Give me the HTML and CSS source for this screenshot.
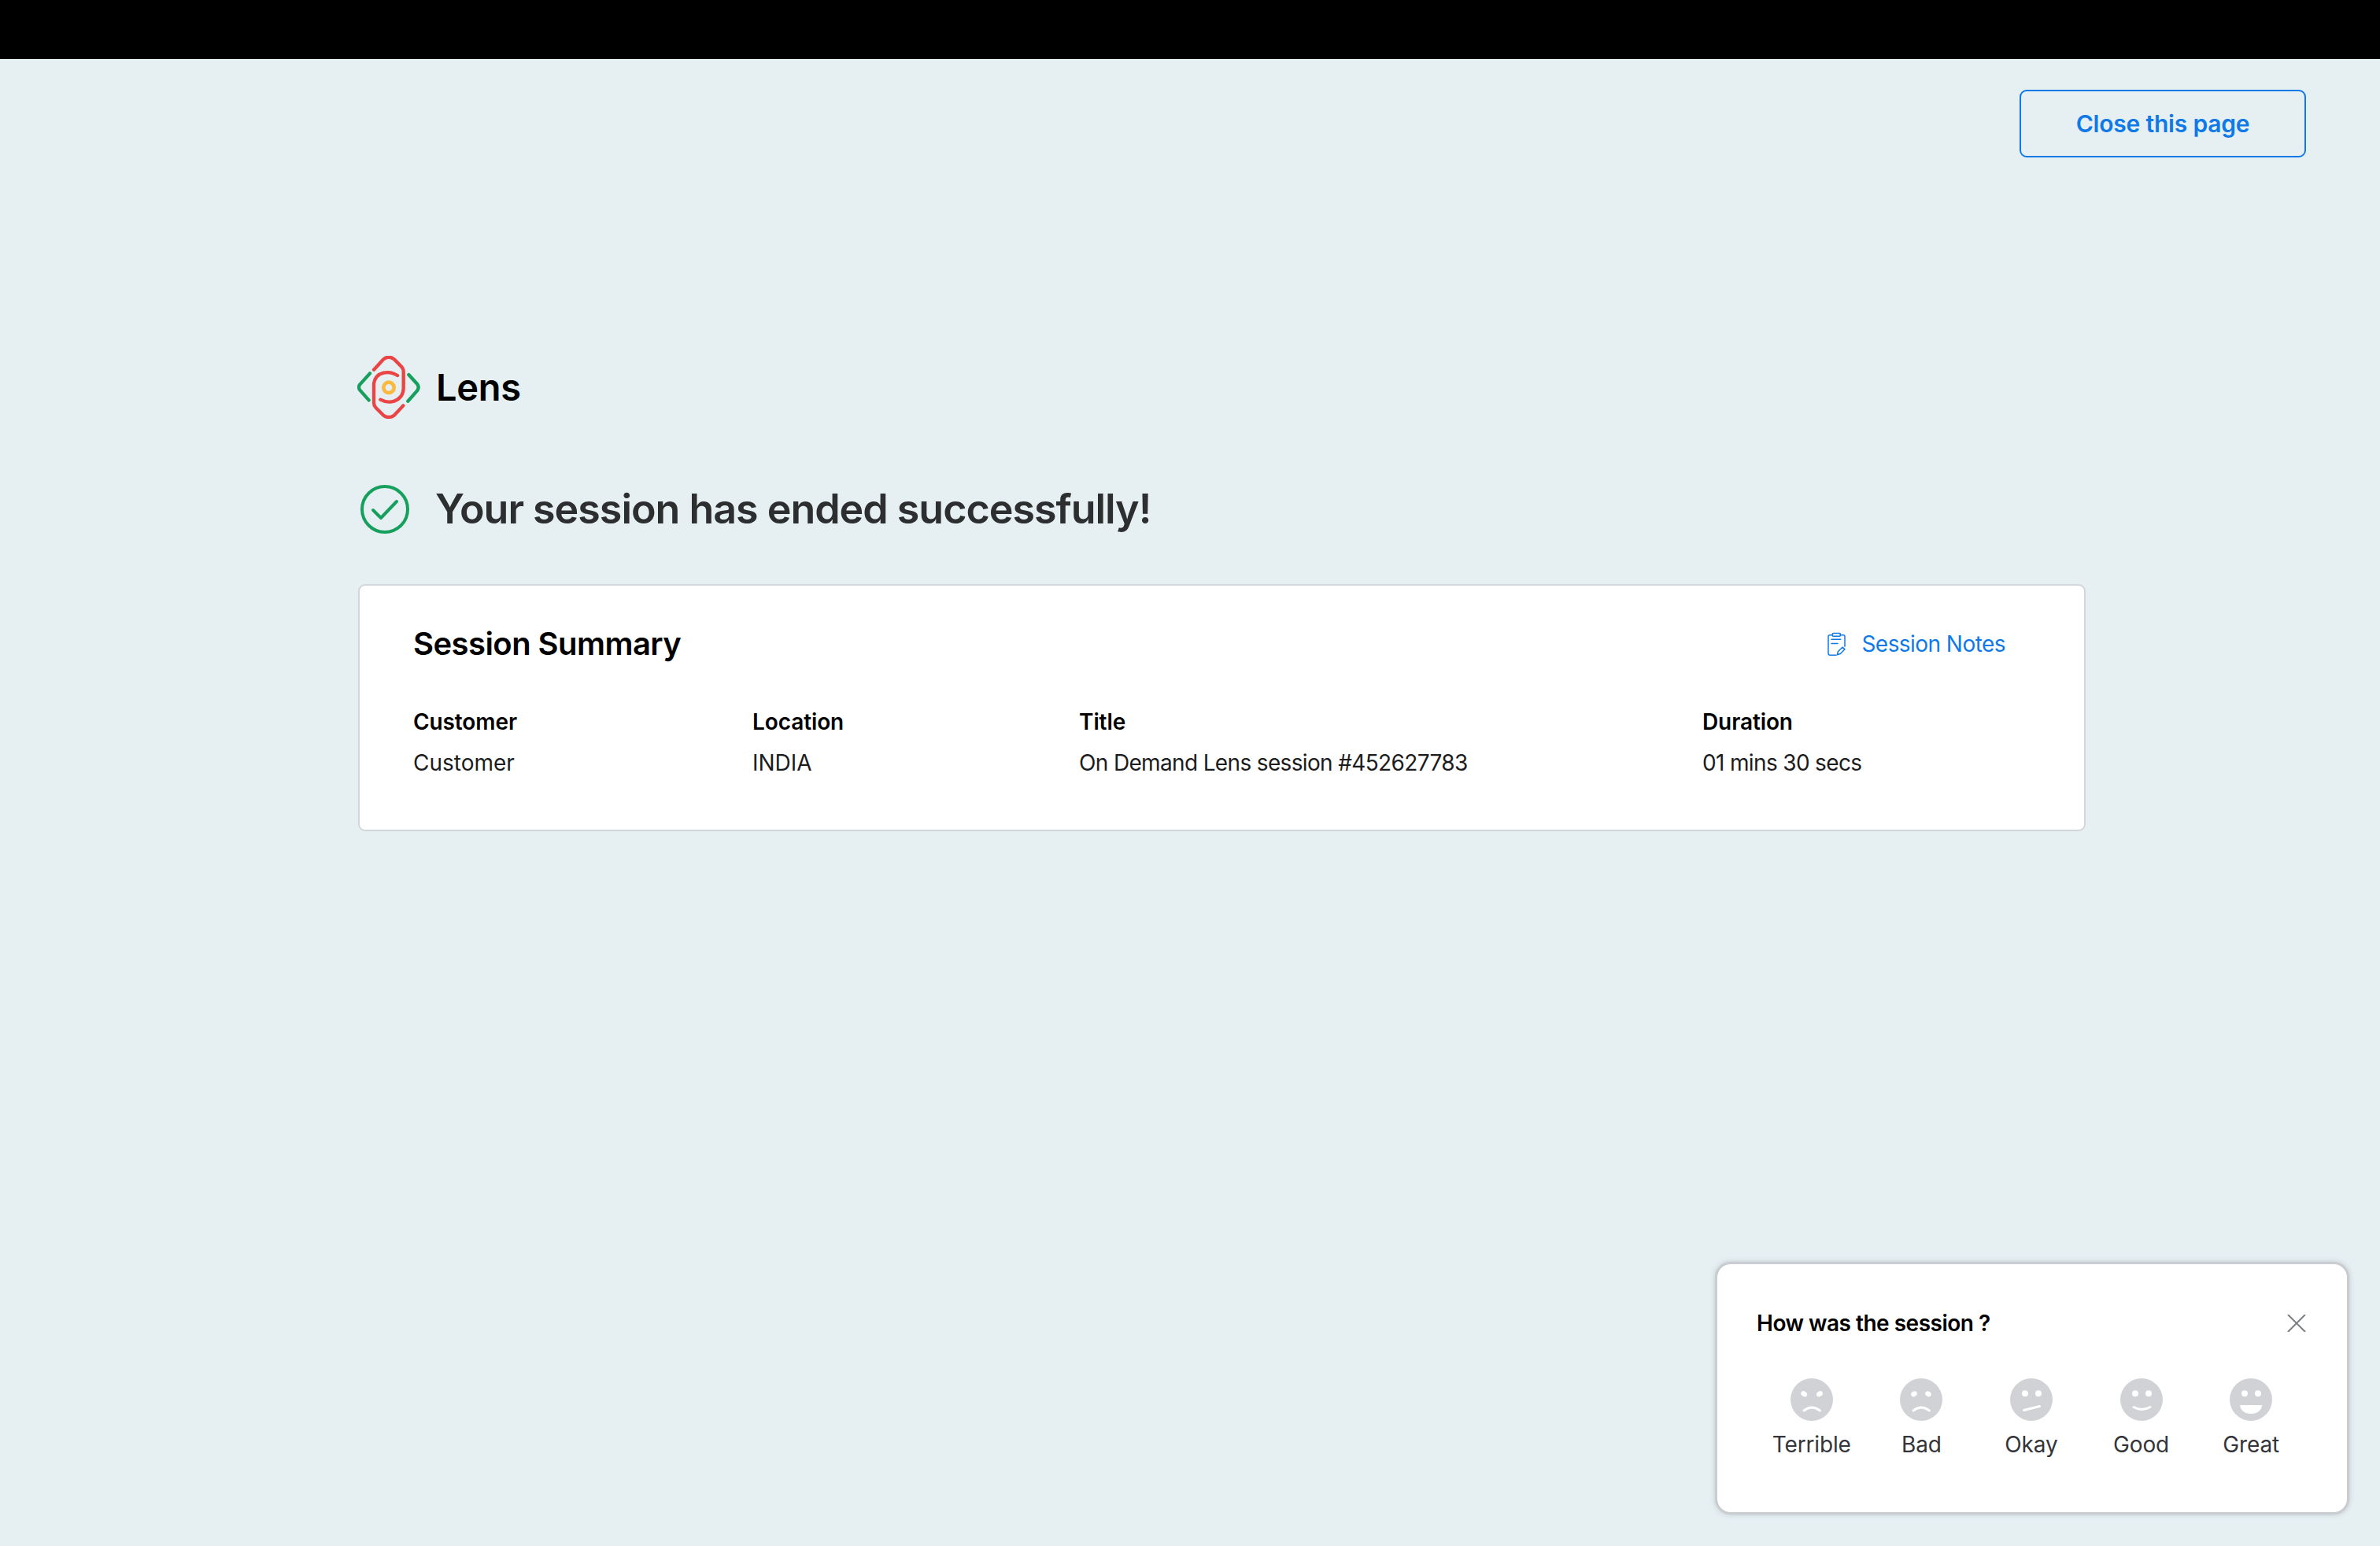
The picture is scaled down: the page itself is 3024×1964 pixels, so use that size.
FILE: index.html
```html
<!DOCTYPE html>
<html lang="en">
<head>
<meta charset="utf-8">
<title>Lens</title>
<link rel="stylesheet" href="styles.css">
</head>
<body>
<div class="topbar"></div>
<div class="actions"><button class="close-btn">Close this page</button></div>
<main class="content">
  <div class="brand">
    <svg class="brand-logo" viewBox="72 65 240 240" fill="none" stroke-linecap="round" stroke-linejoin="round" stroke-width="13">
      <path stroke="#17a05d" d="M120 132L82 174Q74 185 82 196L116 234"/>
      <path stroke="#17a05d" d="M268 137L300 172Q310 185 300 198L265 238"/>
      <path stroke="#ea4444" d="M135 118L172 78Q192 62 212 78L240 106Q248 114 248 126V190Q246 226 212 238Q186 246 160 232"/>
      <path stroke="#ea4444" d="M247 255L212 292Q192 306 172 292L142 262Q135 254 135 244V170Q140 138 172 130Q200 124 225 140"/>
      <circle cx="192" cy="186" r="20" stroke="#fbb93f" stroke-width="14"/>
    </svg>
    <span class="brand-name">Lens</span>
  </div>
  <div class="status">
    <svg class="status-icon" viewBox="0 0 62 62" fill="none" stroke="#17a05d">
      <circle cx="31" cy="31" r="29" stroke-width="4"/>
      <path d="M16 32L26 42L46 21" stroke-width="4" stroke-linecap="round" stroke-linejoin="round"/>
    </svg>
    <h1 class="status-text">Your session has ended successfully!</h1>
  </div>
  <section class="card">
    <div class="card-head">
      <h2 class="card-title">Session Summary</h2>
      <a class="notes-link">
        <svg class="notes-icon" viewBox="190 130 75 92" fill="none" stroke="#1079e8" stroke-width="4.5" stroke-linecap="round" stroke-linejoin="round">
          <path d="M212 141H202Q196 141 196 147V210Q196 217 202 217H226"/>
          <path d="M242 141H253Q259 141 259 147V184"/>
          <rect x="212" y="134" width="30" height="11" rx="3"/>
          <path d="M208 157H243M208 173H232"/>
          <path d="M230 216L233 204L250 187L259 195L242 212Z"/>
        </svg>
        <span>Session Notes</span>
      </a>
    </div>
    <div class="summary">
      <div class="label">Customer</div><div class="label">Location</div><div class="label">Title</div><div class="label">Duration</div>
      <div class="value">Customer</div><div class="value">INDIA</div><div class="value value-tight">On Demand Lens session #452627783</div><div class="value value-tight">01 mins 30 secs</div>
    </div>
  </section>
</main>
<aside class="feedback">
  <div class="feedback-head">
    <span class="feedback-title">How was the session ?</span>
    <svg class="feedback-close" viewBox="0 0 24 22" fill="none" stroke="#7b7f83" stroke-width="2"><path d="M1 0L23 22M23 0L1 22"/></svg>
  </div>
  <div class="ratings">
    <div class="rating">
      <svg class="face" viewBox="0 0 54 54"><circle class="face-bg" cx="27" cy="27" r="27"/><ellipse class="face-fg" cx="17.2" cy="19.8" rx="4.2" ry="3.2" transform="rotate(30 17.2 19.8)"/><ellipse class="face-fg" cx="37" cy="19.8" rx="4.2" ry="3.2" transform="rotate(-30 37 19.8)"/><path class="face-line" d="M17 41Q27 33 37.5 41"/></svg>
      <span class="rating-name">Terrible</span>
    </div>
    <div class="rating">
      <svg class="face" viewBox="0 0 54 54"><circle class="face-bg" cx="27" cy="27" r="27"/><ellipse class="face-fg" cx="18" cy="19.8" rx="4" ry="3.2" transform="rotate(-30 18 19.8)"/><ellipse class="face-fg" cx="36" cy="19.8" rx="4" ry="3.2" transform="rotate(30 36 19.8)"/><path class="face-line" d="M17 41Q27 33 37.5 41"/></svg>
      <span class="rating-name">Bad</span>
    </div>
    <div class="rating">
      <svg class="face" viewBox="0 0 54 54"><circle class="face-bg" cx="27" cy="27" r="27"/><circle class="face-fg" cx="19" cy="19.2" r="4"/><circle class="face-fg" cx="36" cy="19.2" r="4"/><path class="face-line" d="M17.5 40.5L37.5 35.5"/></svg>
      <span class="rating-name">Okay</span>
    </div>
    <div class="rating">
      <svg class="face" viewBox="0 0 54 54"><circle class="face-bg" cx="27" cy="27" r="27"/><circle class="face-fg" cx="19" cy="19.2" r="4"/><circle class="face-fg" cx="36" cy="19.2" r="4"/><path class="face-line" d="M17 36.5Q27 42.5 38 36.5"/></svg>
      <span class="rating-name">Good</span>
    </div>
    <div class="rating">
      <svg class="face" viewBox="0 0 54 54"><circle class="face-bg" cx="27" cy="27" r="27"/><circle class="face-fg" cx="19" cy="19.2" r="4"/><circle class="face-fg" cx="36" cy="19.2" r="4"/><path class="face-fg" d="M13 34H41.5Q39 45 27 45Q15 45 13 34Z"/></svg>
      <span class="rating-name">Great</span>
    </div>
  </div>
</aside>
</body>
</html>
```
FILE: styles.css
```css
* { box-sizing: border-box; }
html, body { margin: 0; height: 100%; }
body {
  position: relative;
  height: 1964px;
  overflow: hidden;
  background: #e6eff2;
  font-family: Inter, "Noto Sans", sans-serif;
  color: #000;
}
.topbar { height: 75px; background: #000; }
.actions { display: flex; justify-content: flex-end; padding: 39px 94px 0 0; }
.close-btn {
  width: 364px;
  height: 86px;
  border: 2px solid #1079e8;
  border-radius: 9px;
  background: transparent;
  color: #1079e8;
  font: 600 30px Inter, sans-serif;
  letter-spacing: -0.2px;
}
.content { width: 2195px; margin: 252px 0 0 455px; }
.brand { display: flex; align-items: center; height: 80px; margin-left: -1px; }
.brand-logo { width: 80px; height: 80px; flex: none; }
.brand-name { margin-left: 20px; font-size: 47px; font-weight: 600; line-height: 80px; letter-spacing: -0.3px; }
.status { display: flex; align-items: center; height: 62px; margin-top: 84px; padding-left: 3px; }
.status-icon { width: 62px; height: 62px; flex: none; }
.status-text { margin: 0 0 0 33px; font-size: 52px; font-weight: 600; line-height: 62px; letter-spacing: -1.03px; color: #2d2e30; white-space: nowrap; }
.card {
  height: 314px;
  margin-top: 64px;
  padding: 0 0 0 68px;
  background: #fff;
  border: 2px solid #d3d6d9;
  border-radius: 9px;
}
.card-head { display: flex; align-items: center; justify-content: space-between; height: 76px; margin-top: 36px; }
.card-title { margin: 0; font-size: 40px; font-weight: 600; line-height: 48px; letter-spacing: -0.55px; }
.notes-link { display: flex; align-items: center; gap: 19px; margin-right: 100px; color: #1079e8; font-size: 28px; letter-spacing: -0.55px; }
.notes-icon { width: 25px; height: 31px; }
.summary {
  display: grid;
  grid-template-columns: 431px 415px 792px 1fr;
  grid-auto-rows: 52px;
  align-items: center;
  margin-top: 35px;
  font-size: 28px;
}
.label { font-weight: 600; letter-spacing: -0.1px; }
.value { font-weight: 400; color: #1b1c1e; }
.value-tight { letter-spacing: -0.65px; }
.feedback {
  position: absolute;
  left: 2179px;
  top: 1603px;
  width: 806px;
  height: 321px;
  padding: 0 52px 0 50px;
  background: #fff;
  border: 3px solid #c9cdd1;
  border-radius: 20px;
  box-shadow: 0 0 6px rgba(120, 130, 135, .35);
}
.feedback-head { display: flex; align-items: center; justify-content: space-between; height: 40px; margin-top: 55px; }
.feedback-title { font-size: 28px; font-weight: 600; letter-spacing: -0.5px; }
.feedback-close { width: 24px; height: 22px; }
.ratings { display: flex; margin-top: 50px; }
.rating { display: flex; flex-direction: column; align-items: center; width: 140px; }
.face { width: 54px; height: 54px; }
.face-bg { fill: #d0d2d5; }
.face-fg { fill: #fff; }
.face-line { fill: none; stroke: #fff; stroke-width: 3; stroke-linecap: round; }
.rating-name { margin-top: 12px; font-size: 28px; line-height: 36px; letter-spacing: -0.15px; color: #33353a; }
```
